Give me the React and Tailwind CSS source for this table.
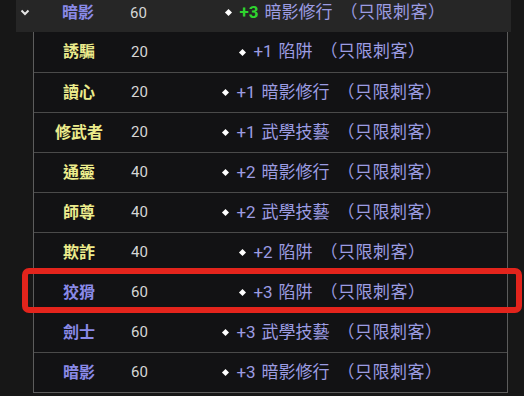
import React from "react";

const rows = [
  { name: "誘騙", lv: 20, plus: "+1", skill: "陷阱", tone: "yellow" },
  { name: "讀心", lv: 20, plus: "+1", skill: "暗影修行", tone: "yellow" },
  { name: "修武者", lv: 20, plus: "+1", skill: "武學技藝", tone: "yellow" },
  { name: "通靈", lv: 40, plus: "+2", skill: "暗影修行", tone: "yellow" },
  { name: "師尊", lv: 40, plus: "+2", skill: "武學技藝", tone: "yellow" },
  { name: "欺詐", lv: 40, plus: "+2", skill: "陷阱", tone: "yellow" },
  { name: "狡猾", lv: 60, plus: "+3", skill: "陷阱", tone: "purple" },
  { name: "劍士", lv: 60, plus: "+3", skill: "武學技藝", tone: "purple" },
  { name: "暗影", lv: 60, plus: "+3", skill: "暗影修行", tone: "purple" },
];

function Effect({ plus, skill, green }) {
  return (
    <div className="flex items-center justify-center pr-[2px] text-[17px] text-[#9c9ce2] whitespace-nowrap">
      <span className="mr-[8px] inline-block w-[5px] h-[5px] rotate-45 bg-white" />
      <span className={green ? "text-[#2fd42f] font-bold" : ""}>{plus}</span>
      <span className="ml-[6px]">{skill}</span>
      <span className="ml-[8px] tracking-[0.5px]">（只限刺客）</span>
    </div>
  );
}

export default function App() {
  return (
    <div
      className="relative w-[524px] h-[396px] overflow-hidden bg-[#171717]"
      style={{ fontFamily: 'Roboto, "Noto Sans CJK TC", sans-serif' }}
    >
      <div className="ml-[16px] mr-[13px] h-[32px] flex bg-[#262626] pb-[8px]">
        <div className="w-[17px] flex items-center justify-center">
          <svg width="10" height="7" viewBox="0 0 10 7">
            <path d="M1.5 1.5 L5 5 L8.5 1.5" fill="none" stroke="#e5e5e5" strokeWidth="2" />
          </svg>
        </div>
        <div className="flex-1 grid grid-cols-[90px_37px_1fr] items-center">
          <div className="text-center text-[16px] font-bold text-[#8a8ae8]">暗影</div>
          <div className="pl-[7px] text-[15px] text-[#d6d6d6]">60</div>
          <div className="-mr-[3px]">
            <Effect plus="+3" skill="暗影修行" green />
          </div>
        </div>
      </div>

      <div className="ml-[33px] w-[475px] border-x border-b border-[#5c5c5c] bg-[#121214]">
        {rows.map((r, i) => (
          <div
            key={i}
            className={
              "grid grid-cols-[90px_37px_1fr] items-center h-[40px] " +
              (i > 0 ? "border-t border-[#4a4a4a]" : "")
            }
          >
            <div
              className={
                "text-center text-[16px] font-bold " +
                (r.tone === "yellow" ? "text-[#ecec8c]" : "text-[#8a8ae8]")
              }
            >
              {r.name}
            </div>
            <div className="pl-[7px] text-[15px] text-[#d6d6d6]">{r.lv}</div>
            <Effect plus={r.plus} skill={r.skill} />
          </div>
        ))}
      </div>

      <div className="absolute left-[22px] top-[268px] w-[500px] h-[45px] border-[6px] border-[#e3241c] rounded-[7px]" />
    </div>
  );
}
